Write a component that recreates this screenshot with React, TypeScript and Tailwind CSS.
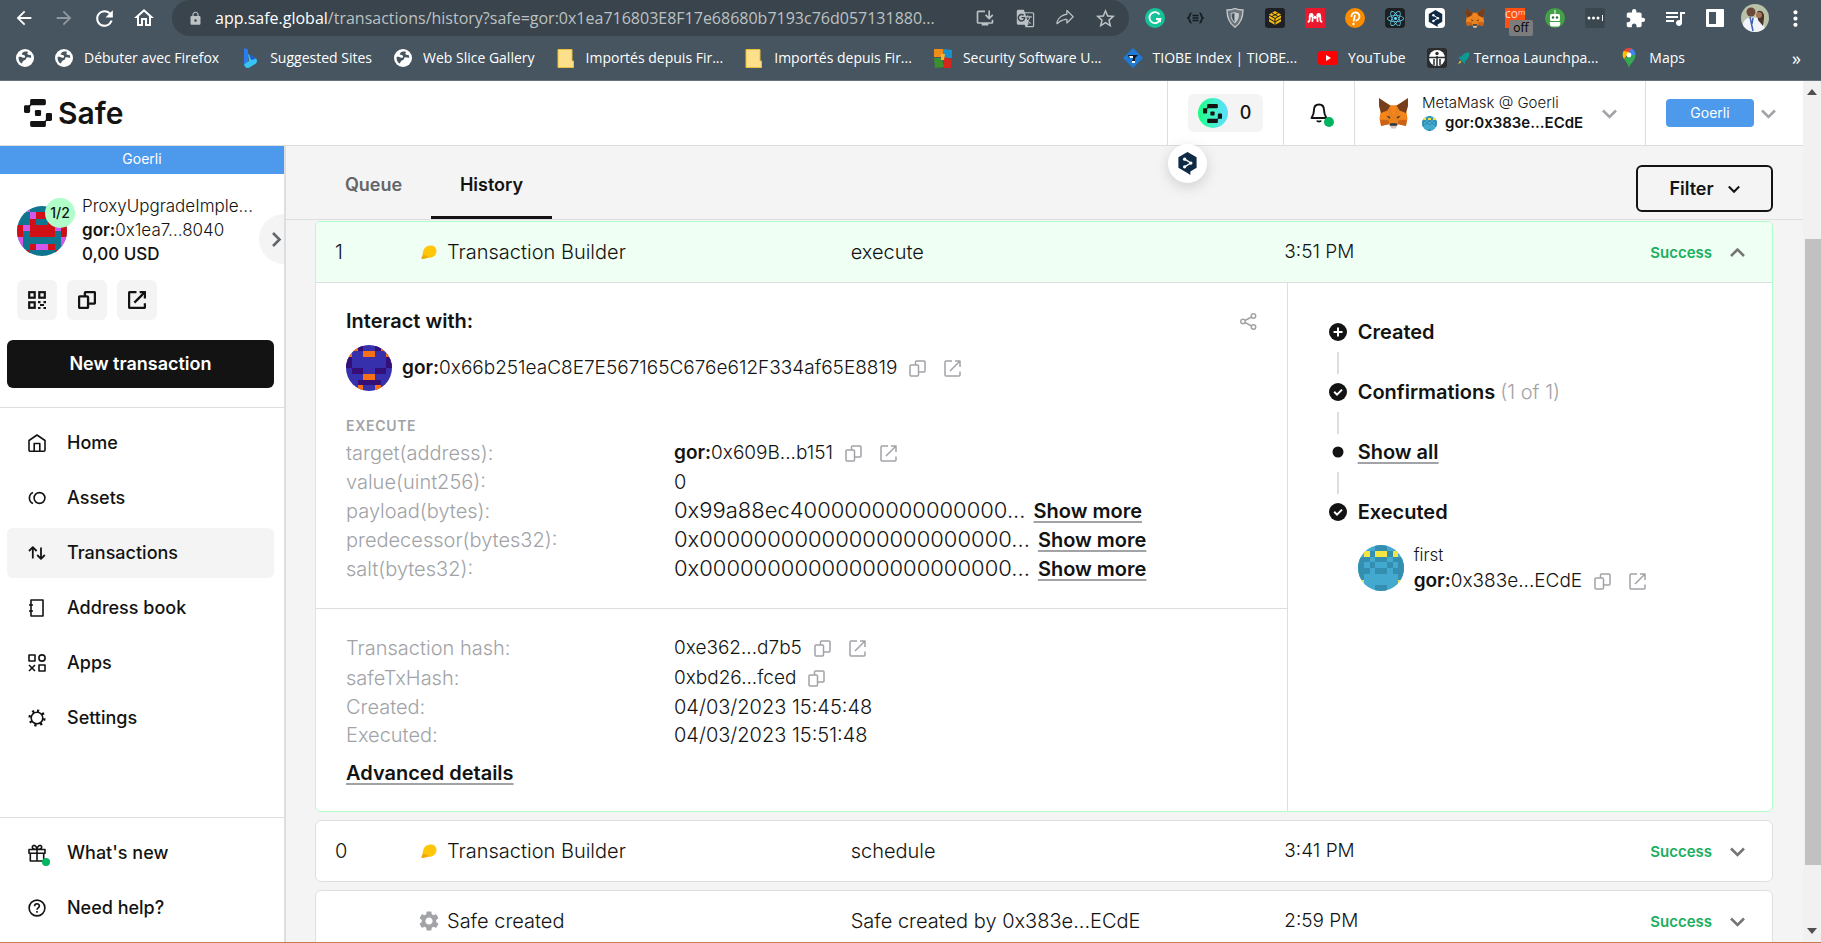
import React from 'react';
import {
  MdArrowBack, MdArrowForward, MdRefresh, MdOutlineHome, MdLock, MdExtension, MdMoreVert, MdQueueMusic,
  MdStarBorder, MdInstallDesktop, MdGTranslate, MdSettings,
} from 'react-icons/md';
import { FaReact } from 'react-icons/fa';
import { PiShareFat } from 'react-icons/pi';

const INK = '#121312';

function Chevron({ up = false, size = 15, color = '#757575', w = 2.6 }: { up?: boolean; size?: number; color?: string; w?: number }) {
  return (
    <svg width={size} height={size} viewBox="0 0 15 15" fill="none" stroke={color} strokeWidth={w} aria-hidden="true">
      <path d={up ? 'M1 11 7.5 4.5 14 11' : 'M1 4.5 7.5 11 14 4.5'} />
    </svg>
  );
}

function SafeMark({ size, className }: { size: number; className?: string }) {
  return (
    <svg width={size} height={size} viewBox="0 0 32 32" fill="currentColor" className={className} aria-hidden="true">
      <path d="M8.5 0H23a2 2 0 0 1 2 2v3.4a1.6 1.6 0 0 1-1.6 1.6H9a2 2 0 0 0-2 2v5.4A1.6 1.6 0 0 1 5.400 16H1.600A1.600 1.600 0 0 1 0 14.400V8.600A1.600 1.600 0 0 1 1.600 7H5.400A1.600 1.600 0 0 0 7 5.400V1.600A1.600 1.600 0 0 1 8.500 0Z" />
      <path d="M23.500 32H9a2 2 0 0 1-2-2v-3.400A1.600 1.600 0 0 1 8.600 25H23a2 2 0 0 0 2-2v-5.400A1.600 1.600 0 0 1 26.600 16h3.800A1.600 1.600 0 0 1 32 17.600v5.800A1.600 1.600 0 0 1 30.400 25h-3.800A1.600 1.600 0 0 0 25 26.600v3.800A1.600 1.600 0 0 1 23.500 32Z" />
      <rect x="12.500" y="12.500" width="7" height="7" rx="1.500" />
    </svg>
  );
}

function Blockie({ rows, colors, size }: { rows: string[]; colors: Record<string, string>; size: number }) {
  return (
    <svg width={size} height={size} viewBox="0 0 8 8" className="shrink-0 rounded-full" shapeRendering="crispEdges" aria-hidden="true">
      <rect width="8" height="8" fill={colors.a} />
      {rows.flatMap((r, y) =>
        r.split('').flatMap((c, x) =>
          c === 'a' ? [] : [
            <rect key={`l${x}-${y}`} x={x} y={y} width="1" height="1" fill={colors[c]} />,
            <rect key={`r${x}-${y}`} x={7 - x} y={y} width="1" height="1" fill={colors[c]} />,
          ]
        )
      )}
    </svg>
  );
}

const proxyBlockie = {
  rows: ['acaa', 'aacb', 'aaba', 'bcbb', 'babb', 'caaa', 'cabc', 'abaa'],
  colors: { a: '#10758f', b: '#d00f17', c: '#d158ea' },
};
const targetBlockie = {
  rows: ['bcba', 'caac', 'baaa', 'baaa', 'abba', 'aaac', 'aabb', 'aaca'],
  colors: { a: '#3730ad', b: '#350f78', c: '#f76f17' },
};
const ownerBlockie = {
  rows: ['aaab', 'acbc', 'bbab', 'baba', 'bbab', 'baaa', 'caaa', 'aaab'],
  colors: { a: '#43a9cf', b: '#338eb0', c: '#f2e442' },
};

function Fox({ size }: { size: number }) {
  return (
    <svg width={size} height={size} viewBox="0 0 30 30" aria-hidden="true">
      <path fill="#e8821e" d="M1 1 12 7h6L29 1l-1.500 12 1 7-1.500 7-7-2-3.500 4h-3L10 25l-7 2-1.500-7 1-7Z" />
      <path fill="#763e1a" d="M1 0 12 7.500 9 12l-6 2.500L1 8ZM29 0 18 7.500l3 4.500 6 2.500L29 8Z" />
      <path fill="#f6851b" d="m12 8 3 11 3-11ZM3 15l6-2.500 2 6-9 3ZM27 15l-6-2.500-2 6 9 3Z" />
      <path fill="#cd6116" d="m2 21 8 .5 1 4-8 1.500ZM28 21l-8 .5-1 4 8 1.500Z" />
      <path fill="#233447" d="m8 17 4 1.500-1 1.500ZM22 17l-4 1.500 1 1.500ZM12 24.500h6l.5 2.500h-7Z" />
      <path fill="#d7c1b3" d="m11 26 2 3.500h4l2-3.500-1 .8h-6Z" />
    </svg>
  );
}

function CopyIcon({ size = 17, w = 1.5 }: { size?: number; w?: number }) {
  return (
    <svg width={size} height={size} viewBox="0 0 17 17" fill="none" stroke="currentColor" strokeWidth={w} strokeLinejoin="round" aria-hidden="true">
      <rect x="1" y="5" width="8.500" height="11" rx="1" />
      <path d="M6.500 5V2a1 1 0 0 1 1-1H15a1 1 0 0 1 1 1v9a1 1 0 0 1-1 1H9.500" />
    </svg>
  );
}

function OpenIcon({ size = 17, w = 1.5 }: { size?: number; w?: number }) {
  return (
    <svg width={size} height={size} viewBox="0 0 17 17" fill="none" stroke="currentColor" strokeWidth={w} strokeLinejoin="round" aria-hidden="true">
      <path d="M8 1H2a1 1 0 0 0-1 1v13a1 1 0 0 0 1 1h13a1 1 0 0 0 1-1v-3.500M6 11 15.500 1.500M11 1h5v6" />
    </svg>
  );
}

function CopyButton() {
  return <button type="button" aria-label="Copy to clipboard" className="text-[#a1a3a7]"><CopyIcon /></button>;
}
function OpenLink() {
  return <a href="#explorer" aria-label="View on explorer" className="text-[#a1a3a7]"><OpenIcon /></a>;
}

/* ---------- browser chrome ---------- */

function GlobeIcon() {
  return (
    <svg width="18" height="18" viewBox="0 0 18 18" aria-hidden="true">
      <circle cx="9" cy="9" r="9" fill="#fff" />
      <path d="M9.500 2.500c-2.500 0-3.500 1.500-3.800 3 1.300.4 2.700.2 3.300 1.500.6 1.200-.7 2-1.800 1.700C5.500 8.300 4.300 7.300 2.600 8c-.3 3 1 5.300 2.900 6.500 1-.5.800-2 2-2.700 1-.6 2.500-.8 2.500-2 0-1 .9-1.800 2-1.500 1 .3 2.200.7 3.300.2-.1-1-.4-2-.9-2.800-1.400.5-3 .3-3-1.200 0-.8.500-1.200 1-1.500-1-.4-1.900-.5-2.900-.5Z" fill="#46555f" />
    </svg>
  );
}
function BingIcon() {
  return (
    <svg width="18" height="20" viewBox="0 0 18 20" aria-hidden="true">
      <path fill="#2a7bf0" d="m3 0 4 1.500V14l-4 2.500Z" />
      <path fill="#36c5f5" d="M3 16.500 8 13l-1-7 8 4.500a4 4 0 0 1 0 5L7.500 20a4 4 0 0 1-4.500-3.500Z" />
      <path fill="#1d5fd1" d="m8 6 7 4.500L11 12l-1.500-1Z" />
    </svg>
  );
}
function FolderIcon() {
  return (
    <svg width="18" height="19" viewBox="0 0 18 19" aria-hidden="true">
      <path fill="#ffe08a" stroke="#e9bf3c" d="M1 .5h14V12h1.500v6.500H1Z" />
    </svg>
  );
}
function SecurityIcon() {
  return (
    <svg width="20" height="20" viewBox="0 0 20 20" aria-hidden="true">
      <path fill="#f08c1a" d="M1 1h9v8H1Z" /><path fill="#1a8fc9" d="M10 1l9 1v8h-6l-3-2Z" />
      <path fill="#3b8f2e" d="M1 10h8l2 9-9 1Z" /><path fill="#d3261c" d="M11 9l8 2-1 9h-7Z" />
      <path fill="#f6b52b" d="M8 6h4l-1 6H8Z" />
    </svg>
  );
}
function TiobeIcon() {
  return (
    <svg width="20" height="20" viewBox="0 0 20 20" aria-hidden="true">
      <path fill="#1f7ad6" d="M10 0 20 10 10 20 0 10Z" />
      <path fill="#10171e" d="M5 7h10l-3 3v4H9l1-4H6Z" /><path fill="#fff" d="M6 8h4v2H7ZM9 13h3v2H9Z" />
    </svg>
  );
}
function YoutubeIcon() {
  return (
    <svg width="20" height="14" viewBox="0 0 20 14" aria-hidden="true">
      <rect width="20" height="14" rx="3" fill="#f00" /><path fill="#fff" d="M8 4v6l5-3Z" />
    </svg>
  );
}
function TernoaIcon() {
  return (
    <svg width="20" height="20" viewBox="0 0 20 20" aria-hidden="true">
      <rect width="20" height="20" rx="3" fill="#2b2c2e" /><circle cx="10" cy="10" r="8" fill="#fff" />
      <path d="M10 8v10M2 9.500h16M7 11v6M13 11v6" stroke="#2b2c2e" strokeWidth="1.500" /><circle cx="10" cy="5.500" r="1.700" fill="#2b2c2e" />
    </svg>
  );
}
function RocketIcon() {
  return (
    <svg width="13" height="13" viewBox="0 0 13 13" aria-hidden="true">
      <path fill="#0c9a94" d="M12.500.5C8 .5 6 2.500 4.500 4.500L1.500 5l1.500 2 3 3 1.500 2.500L8 9.500C11 7 12.500 4.500 12.500.5Z" />
      <path fill="#f1c232" d="m3 8.500 1.500 1.500-3.500 2.500Z" />
    </svg>
  );
}
function MapsIcon() {
  return (
    <svg width="14" height="20" viewBox="0 0 14 20" aria-hidden="true">
      <path fill="#34a853" d="M7 20c1-5 6.500-7 6.500-13H7L2 11c2 3 4 5 5 9Z" />
      <path fill="#4285f4" d="M7 0c3.500 0 6.500 3 6.500 7H9Z" /><path fill="#ea4335" d="M7 0C4.500 0 2.500 1 1.500 3L5 6.500 9.500.5Z" />
      <path fill="#fbbc04" d="M1.500 3C0 6 .5 9 2 11l6-7Z" /><circle cx="7" cy="7" r="2.400" fill="#fff" />
    </svg>
  );
}

const bookmarks: { label: string; icon: React.ReactNode }[] = [
  { label: 'Débuter avec Firefox', icon: <GlobeIcon /> },
  { label: 'Suggested Sites', icon: <BingIcon /> },
  { label: 'Web Slice Gallery', icon: <GlobeIcon /> },
  { label: 'Importés depuis Fir...', icon: <FolderIcon /> },
  { label: 'Importés depuis Fir...', icon: <FolderIcon /> },
  { label: 'Security Software U...', icon: <SecurityIcon /> },
  { label: 'TIOBE Index | TIOBE...', icon: <TiobeIcon /> },
  { label: 'YouTube', icon: <YoutubeIcon /> },
];

function DeeplHex({ size, fill }: { size: number; fill: string }) {
  return (
    <svg width={size} height={size} viewBox="0 0 24 24" aria-hidden="true">
      <path fill={fill} d="m12 0 9.500 5.500v11L15 20.300V24l-4-2.500-8.500-5v-11Z" />
      <path d="m9 7.500 6.500 4L9 15.500" stroke="#fff" strokeWidth="1.400" fill="none" />
      <circle cx="9" cy="7.500" r="1.700" fill="#fff" /><circle cx="15.500" cy="11.500" r="1.700" fill="#fff" /><circle cx="9" cy="15.500" r="1.700" fill="#fff" />
    </svg>
  );
}

const extensions: { name: string; icon: React.ReactNode }[] = [
  { name: 'Grammarly', icon: (
    <svg width="20" height="20" viewBox="0 0 20 20"><circle cx="10" cy="10" r="10" fill="#15c39a" /><path d="M14.500 6.500A5.500 5.500 0 1 0 15.300 11H11" fill="none" stroke="#fff" strokeWidth="1.900" /><path d="m12.500 12.500 3.500-2v4Z" fill="#fff" /></svg>) },
  { name: 'JSON viewer', icon: (
    <svg width="17" height="12" viewBox="0 0 17 12" fill="none" stroke="#151b1f" strokeWidth="1.700"><path d="M4.500 1C2 1 3.500 5 1 6c2.500 1 1 5 3.500 5M12.500 1C15 1 13.500 5 16 6c-2.500 1-1 5-3.500 5M5.500 3.500h6M5.500 6h6M5.500 8.500h6" /></svg>) },
  { name: 'Shield', icon: (
    <svg width="18" height="20" viewBox="0 0 18 20"><path d="M1 2c3 0 6-.5 8-1.500C11 1.500 14 2 17 2c0 8-2 13-8 17.300C3 15 1 10 1 2Z" fill="#6c757b" stroke="#c5cacc" strokeWidth="1.300" /><path d="M5 5.500 9 4.500V15C6 12.500 5 10 5 5.500Z" fill="#46555f" stroke="#c5cacc" /><path d="M9 4.500 13 5.500C13 10 12 12.500 9 15Z" fill="#c5cacc" /></svg>) },
  { name: 'Binance wallet', icon: (
    <svg width="20" height="20" viewBox="0 0 20 20"><rect width="20" height="20" rx="3" fill="#1e2026" /><path d="m10 3 6 3.500v7L10 17l-6-3.500v-7Z" fill="#f0b90b" /><path d="m4 7 6 3.500L16 7M10 10.500V17M7 5l6 3.500M13 5 7 8.500M4 10.500l6 3.500 6-3.500" stroke="#1e2026" fill="none" /></svg>) },
  { name: 'Mendeley', icon: (
    <svg width="20" height="20" viewBox="0 0 20 20"><rect width="20" height="20" fill="#e9182c" /><circle cx="6.300" cy="7.300" r="2.300" fill="#fff" /><circle cx="13.700" cy="7.300" r="2.300" fill="#fff" /><circle cx="10" cy="9.300" r="1.600" fill="#fff" /><path d="M4.700 8v3.500c0 1.500-.7 2.300-2 2.500M8 8.500c-.8 1.500 0 3-.8 5.500M12 8.500c.8 1.500 0 3 .8 5.500M15.300 8v3.500c0 1.500.7 2.300 2 2.500" fill="none" stroke="#fff" strokeWidth="1.800" /></svg>) },
  { name: 'Polkadot', icon: (
    <svg width="20" height="20" viewBox="0 0 20 20"><circle cx="10" cy="10" r="10" fill="#fb8c00" /><path d="M6.500 9a4 4 0 1 1 4 3.500M10 7 8.500 13.500" fill="none" stroke="#fff" strokeWidth="1.800" /><circle cx="8.500" cy="16" r="1.200" fill="#fff" /></svg>) },
  { name: 'React Developer Tools', icon: (
    <span className="flex size-5 items-center justify-center rounded-sm bg-[#1d1f21] text-[#61dafb]"><FaReact size={17} /></span>) },
  { name: 'DeepL', icon: <span className="flex size-5 items-center justify-center rounded-sm bg-white"><DeeplHex size={17} fill="#0f2b46" /></span> },
  { name: 'MetaMask', icon: <Fox size={20} /> },
  { name: 'Compose', icon: (
    <span className="relative flex size-5 items-start bg-[#ff4f12] text-[#ffd9cb]">
      <span className="text-xs leading-3">co</span><span className="text-[8px] leading-2">m</span>
      <span className="absolute top-3 left-1 flex h-4 w-6 items-center justify-center rounded-xs bg-[#7c7c7c] text-xs text-black">off</span>
    </span>) },
  { name: 'Bot', icon: (
    <svg width="20" height="20" viewBox="0 0 20 20"><circle cx="10" cy="10" r="10" fill="#43a047" /><rect x="5" y="6" width="10" height="7" rx="1.500" fill="#fff" /><path d="M10 2v4M5 14.500h10l-1 3.500H6Z" stroke="#fff" fill="#fff" /><circle cx="8" cy="9.500" r="1.200" fill="#2e6f31" /><circle cx="12" cy="9.500" r="1.200" fill="#2e6f31" /></svg>) },
  { name: 'Password manager', icon: (
    <svg width="20" height="20" viewBox="0 0 20 20"><rect width="20" height="20" rx="2" fill="#3a474f" /><circle cx="4" cy="10" r="1.500" fill="#fff" /><circle cx="8.500" cy="10" r="1.500" fill="#fff" /><circle cx="13" cy="10" r="1.500" fill="#fff" /><path d="M17.500 7v6" stroke="#fff" /></svg>) },
  { name: 'Extensions', icon: <MdExtension size={21} /> },
  { name: 'Media controls', icon: <MdQueueMusic size={24} /> },
  { name: 'Side panel', icon: (
    <svg width="18" height="18" viewBox="0 0 18 18"><rect width="18" height="18" rx="1" fill="#fff" /><rect x="3" y="3" width="7" height="12" fill="#46555f" /></svg>) },
  { name: 'Profile', icon: (
    <svg width="28" height="28" viewBox="0 0 28 28" className="rounded-full"><rect width="28" height="28" fill="#b9c2a9" /><path d="M0 28C2 14 6 13 12 14c5-2 10 2 13 14Z" fill="#f2f4fb" /><circle cx="10" cy="8" r="4.500" fill="#6b4a3a" /><path d="M16 8c3-3 8 0 7 6l-1 8-5-6Z" fill="#4b342b" /><circle cx="18" cy="11" r="3" fill="#a87458" /><path d="m9 13 3 14M12 14l-1 6" stroke="#3f62b5" strokeWidth="1.500" /></svg>) },
  { name: 'Menu', icon: <MdMoreVert size={25} /> },
];

function BrowserChrome() {
  return (
    <div className="shrink-0 border-b border-[#66737c] bg-[#46555f] font-['Open_Sans',sans-serif] text-white">
      <div className="flex h-9 items-center">
        <div className="flex items-center pl-3">
          <button type="button" aria-label="Back" className="flex w-10 pl-px"><MdArrowBack size={22} /></button>
          <button type="button" aria-label="Forward" className="flex w-10 pl-px text-[#8f999f]"><MdArrowForward size={22} /></button>
          <button type="button" aria-label="Reload" className="flex w-10"><MdRefresh size={25} /></button>
          <button type="button" aria-label="Home" className="flex w-10"><MdOutlineHome size={24} /></button>
        </div>
        <div className="flex h-9 min-w-0 flex-1 items-center rounded-full bg-[#39444c] pr-1 pl-4 text-[#bcc1c4]">
          <MdLock size={15} className="shrink-0" />
          <div className="min-w-0 flex-1 pl-3 text-base whitespace-nowrap">
            <span className="text-white">app.safe.global</span>/transactions/history?safe=gor:0x1ea716803E8F17e68680b7193c76d057131880...
          </div>
          <button type="button" aria-label="Install app" className="flex w-10 shrink-0 justify-center"><MdInstallDesktop size={20} /></button>
          <button type="button" aria-label="Translate" className="flex w-10 shrink-0 justify-center"><MdGTranslate size={19} /></button>
          <button type="button" aria-label="Share" className="flex w-10 shrink-0 justify-center"><PiShareFat size={20} /></button>
          <button type="button" aria-label="Bookmark" className="flex w-10 shrink-0 justify-center"><MdStarBorder size={23} /></button>
        </div>
        <div className="flex shrink-0 pr-1.5 pl-1.5">
          {extensions.map((e) => (
            <button type="button" key={e.name} aria-label={e.name} className="flex w-10 items-center justify-center">{e.icon}</button>
          ))}
        </div>
      </div>
      <div className="flex h-11 items-center pr-5 pl-4 text-sm">
        <a href="#bookmark" aria-label="Bookmark" className="mr-5"><GlobeIcon /></a>
        <div className="flex gap-[21px] whitespace-nowrap">
          {bookmarks.map((b, i) => (
            <a key={i} href="#bookmark" className="flex items-center gap-2.5"><span className="flex w-5 justify-center">{b.icon}</span>{b.label}</a>
          ))}
          <a href="#bookmark" className="flex items-center gap-2.5"><TernoaIcon /><span className="flex items-center gap-1"><RocketIcon />Ternoa Launchpa...</span></a>
          <a href="#bookmark" className="flex items-center gap-2.5"><span className="flex w-5 justify-center"><MapsIcon /></span>Maps</a>
        </div>
        <button type="button" aria-label="More bookmarks" className="ml-auto text-lg">»</button>
      </div>
    </div>
  );
}

/* ---------- app header ---------- */

function AppHeader() {
  return (
    <header className="flex h-[65px] shrink-0 items-stretch border-b border-[#dcdee0] bg-white">
      <a href="#home" aria-label="Safe" className="flex items-center gap-1.5 pl-6 text-[#121312]">
        <SafeMark size={28} />
        <span className="text-[30px] font-semibold">Safe</span>
      </a>
      <div className="ml-auto flex w-[116px] items-center justify-center border-l border-[#dcdee0]">
        <button type="button" className="flex h-[38px] items-center gap-3 rounded-md bg-[#f4f4f4] pr-3 pl-2.5 text-lg font-medium">
          <span className="flex size-[30px] items-center justify-center rounded-full bg-linear-to-r from-[#12ff80] to-[#5fddff]"><SafeMark size={19} /></span>
          0
        </button>
      </div>
      <button type="button" aria-label="Notifications" className="flex w-[71px] items-center justify-center border-l border-[#dcdee0]">
        <span className="relative">
          <svg width="18" height="20" viewBox="0 0 18 20" fill="none" stroke={INK} strokeWidth="1.900" strokeLinejoin="round" aria-hidden="true">
            <path d="M9 1.500C5.500 1.500 4 4 4 7c0 4-1 5.500-2.500 8h15C15 12.500 14 11 14 7c0-3-1.500-5.500-5-5.500Z" /><path d="M7 17.500c.5 1.500 3.500 1.500 4 0" />
          </svg>
          <span className="absolute -right-1.5 -bottom-1 size-2.5 rounded-full bg-[#00b460]" />
        </span>
      </button>
      <button type="button" className="flex w-[291px] items-center border-l border-[#dcdee0] pl-[23px] text-left">
        <Fox size={31} />
        <span className="ml-[13px] flex flex-col text-[15px] leading-5">
          <span className="font-light">MetaMask @ Goerli</span>
          <span className="flex items-center gap-2 font-semibold"><Blockie {...ownerBlockie} size={15} />gor:0x383e...ECdE</span>
        </span>
        <span className="mr-7 ml-auto"><Chevron color="#a1a3a7" /></span>
      </button>
      <label className="flex w-[158px] items-center border-l border-[#dcdee0] pl-5">
        <select aria-label="Network" className="h-7 w-[88px] appearance-none rounded-sm bg-[#4d99eb] text-center text-sm text-white"><option>Goerli</option></select>
        <span className="ml-[7px]"><Chevron color="#a1a3a7" /></span>
      </label>
    </header>
  );
}

/* ---------- sidebar ---------- */

const navIcon = { width: 18, height: 18, viewBox: '0 0 18 18', fill: 'none', stroke: INK, strokeWidth: 1.6, strokeLinejoin: 'round' as const, 'aria-hidden': true };

const nav: { label: string; icon: React.ReactNode }[] = [
  { label: 'Home', icon: <svg {...navIcon}><path d="M1 6.500 9 1l8 5.500V16a1.200 1.200 0 0 1-1.200 1.200H2.200A1.200 1.200 0 0 1 1 16Z" /><path d="M6.200 17V9.500h5.600V17" /></svg> },
  { label: 'Assets', icon: <svg {...navIcon}><circle cx="11.500" cy="9" r="5.400" /><path d="M5 3.500a6 6 0 0 0 0 11" /></svg> },
  { label: 'Transactions', icon: <svg {...navIcon} strokeWidth="1.800"><path d="M4.800 14.500v-11M1 7l3.800-3.800L8.600 7M13 3.500v11M9.200 11l3.800 3.800L16.800 11" /></svg> },
  { label: 'Address book', icon: <svg {...navIcon}><path d="M3 1h12v16H3ZM1 6h4M1 12h4" /></svg> },
  { label: 'Apps', icon: <svg {...navIcon}><rect x="1" y="1" width="6" height="6" /><circle cx="14" cy="4" r="3.100" /><rect x="11" y="11" width="6" height="6" /><path d="m1 11 6 6M7 11l-6 6" /></svg> },
  { label: 'Settings', icon: <svg {...navIcon}><circle cx="9" cy="9" r="5.800" /><path strokeWidth="2.600" strokeDasharray="2.200 3.558" d="M9 1.700a7.300 7.300 0 1 1-.01 0" /></svg> },
];

function Sidebar() {
  return (
    <aside className="relative flex w-[286px] shrink-0 flex-col border-r-2 border-[#dcdee0] bg-white">
      <div className="flex h-7 items-center justify-center bg-[#4d99eb] pb-0.5 text-sm text-white">Goerli</div>
      <div className="flex gap-[15px] pt-5 pl-[17px]">
        <div className="relative pt-3">
          <Blockie {...proxyBlockie} size={50} />
          <span className="absolute top-1 left-7 flex size-[30px] items-center justify-center rounded-full bg-[#b0ffc9] text-sm font-medium">1/2</span>
        </div>
        <div className="min-w-0 text-[17px] leading-6 whitespace-nowrap">
          <div className="font-light">ProxyUpgradeImple...</div>
          <div className="font-light"><b className="font-semibold">gor:</b>0x1ea7...8040</div>
          <div className="font-medium">0,00 USD</div>
        </div>
      </div>
      <button type="button" aria-label="Collapse sidebar" className="absolute top-[68px] right-0 flex h-[50px] w-[25px] items-center justify-end rounded-l-full bg-[#f4f4f4]">
        <span className="rotate-90"><Chevron up color="#636669" /></span>
      </button>
      <div className="flex gap-2.5 pt-3.5 pl-[17px]">
        <button type="button" aria-label="Show QR code" className="flex size-10 items-center justify-center rounded-md bg-[#f4f4f4]">
          <svg width="18" height="18" viewBox="0 0 18 18" fill="none" stroke={INK} strokeWidth="2.200" aria-hidden="true"><rect x="1.200" y="1.200" width="5.500" height="5.500" /><rect x="11.300" y="1.200" width="5.500" height="5.500" /><rect x="1.200" y="11.300" width="5.500" height="5.500" /><path d="M10 11.200h2.500M15.500 11.200H18M12 14h4M10 17h2.500M15.500 17H18" /></svg>
        </button>
        <button type="button" aria-label="Copy address" className="flex size-10 items-center justify-center rounded-md bg-[#f4f4f4]"><CopyIcon size={18} w={2.2} /></button>
        <a href="#explorer" aria-label="View on explorer" className="flex size-10 items-center justify-center rounded-md bg-[#f4f4f4]"><OpenIcon size={18} w={2.2} /></a>
      </div>
      <div className="px-[7px] pt-5 pb-[19px]">
        <button type="button" className="h-12 w-[267px] rounded-md bg-[#121312] text-lg font-semibold text-white">New transaction</button>
      </div>
      <nav className="flex flex-1 flex-col gap-[5px] border-t border-[#dcdee0] pt-2.5 pl-[7px] text-lg font-medium">
        {nav.map((n) => (
          <a key={n.label} href="#nav" aria-current={n.label === 'Transactions' ? 'page' : undefined}
            className="flex h-[50px] w-[267px] items-center gap-[21px] rounded-md pl-[21px] aria-[current=page]:bg-[#f4f4f4]">
            {n.icon}{n.label}
          </a>
        ))}
      </nav>
      <div className="flex flex-col gap-[5px] border-t border-[#dcdee0] pt-2.5 pb-[9px] pl-[7px] text-lg font-medium">
        <button type="button" className="flex h-[50px] w-[267px] items-center gap-[21px] pl-[21px]">
          <span className="relative">
            <svg {...navIcon}><path d="M1 5.500h16v3.800H1ZM2.300 9.300V17h13.400V9.300M9 5.500V17M9 5.500C6 5.500 4.300 4.500 4.300 3c0-2 4-3 4.700 2.500ZM9 5.500c3 0 4.700-1 4.700-2.500 0-2-4-3-4.700 2.500Z" /></svg>
            <span className="absolute -right-1 -bottom-1 size-2 rounded-full bg-[#00b460]" />
          </span>
          What's new
        </button>
        <a href="#help" className="flex h-[50px] w-[267px] items-center gap-[21px] pl-[21px]">
          <svg {...navIcon}><circle cx="9" cy="9" r="7.900" /><path d="M6.600 7.200C6.600 4 11.400 4 11.400 7c0 1.800-2.400 1.800-2.400 3.700M9 12v1.800" /></svg>
          Need help?
        </a>
      </div>
    </aside>
  );
}

/* ---------- transactions ---------- */

function Hardhat() {
  return (
    <svg width="16" height="16" viewBox="0 0 16 16" aria-hidden="true">
      <path fill="#ffc60a" d="M1.500 11C2 5 4.500 1.500 9.500 1.500c3.500 0 6 2 6 5.500 0 3-2 5.500-5 6.500L6 14Z" /><path fill="#eda90a" d="M.5 13.500 2 10.500c1.500 1 3.500 1 5.500 2.500C6 14.500 3 15 .5 15Z" />
    </svg>
  );
}

type TxRow = { nonce: string; type: string; icon: React.ReactNode; info: string; time: string };

function TxSummary({ tx, open = false }: { tx: TxRow; open?: boolean }) {
  return (
    <button type="button" aria-expanded={open}
      className="grid h-[60px] w-full grid-cols-[84px_431fr_433fr_460fr] items-center pr-[27px] pl-[19px] text-left text-xl font-light">
      <span>{tx.nonce}</span>
      <span className="flex items-center gap-2"><span className="flex w-5 justify-center text-[#a1a3a7]">{tx.icon}</span>{tx.type}</span>
      <span>{tx.info}</span>
      <span className="flex items-center text-[19px]">{tx.time}
        <span className="mr-[18px] ml-auto text-[15px] font-semibold text-[#1aae60]">Success</span><Chevron up={open} />
      </span>
    </button>
  );
}

function Detail({ label, children, h = 'h-7' }: { label: string; children: React.ReactNode; h?: string }) {
  return (
    <div className={`grid grid-cols-[328px_1fr] items-center ${h}`}>
      <dt className="text-[#a1a3a7]">{label}</dt>
      <dd className="flex items-center whitespace-nowrap">{children}</dd>
    </div>
  );
}

const linkCls = 'leading-7 font-semibold underline decoration-[#a1a3a7] decoration-2 underline-offset-3';

function LongValue({ children }: { children: React.ReactNode }) {
  return (
    <span className="flex items-baseline gap-2">
      <span className="text-[22px] leading-7">{children}</span>
      <button type="button" className={linkCls}>Show more</button>
    </span>
  );
}

function Address({ prefix, children, open = true }: { prefix?: string; children: React.ReactNode; open?: boolean }) {
  return (
    <span className="flex items-center gap-3 text-[19px]">
      <span>{prefix && <b className="font-semibold">{prefix}</b>}{children}</span>
      <span className="flex gap-[18px]"><CopyButton />{open && <OpenLink />}</span>
    </span>
  );
}

function Dot({ kind }: { kind: 'plus' | 'check' | 'dot' }) {
  return (
    <svg width="18" height="18" viewBox="0 0 18 18" aria-hidden="true">
      <circle cx="9" cy="9" r={kind === 'dot' ? 5.5 : 9} fill={INK} />
      {kind === 'plus' && <path d="M9 4.500v9M4.500 9h9" stroke="#fff" strokeWidth="2" />}
      {kind === 'check' && <path d="m5.200 8.800 2.800 2.800 5-5" stroke="#fff" strokeWidth="2" fill="none" />}
    </svg>
  );
}

function Step({ kind, children, last = false }: { kind: 'plus' | 'check' | 'dot'; children: React.ReactNode; last?: boolean }) {
  return (
    <li>
      <div className="flex h-6 items-center gap-[11px] font-semibold"><Dot kind={kind} /><div>{children}</div></div>
      {!last && <div className="mt-2 mb-1.5 ml-2 h-[22px] w-0.5 bg-[#dcdee0]" />}
    </li>
  );
}

function TxDetails() {
  return (
    <div className="grid grid-cols-[971fr_484fr] border-t border-[#dcdee0] text-xl font-light">
      <div className="border-r border-[#dcdee0]">
        <div className="border-b border-[#dcdee0] px-[30px] pt-6 pb-[25px]">
          <div className="flex h-7 items-center justify-between">
            <h2 className="font-semibold">Interact with:</h2>
            <button type="button" aria-label="Share" className="text-[#a1a3a7]">
              <svg width="17" height="17" viewBox="0 0 17 17" fill="none" stroke="currentColor" strokeWidth="1.500" aria-hidden="true"><circle cx="3" cy="8.500" r="2.200" /><circle cx="13.500" cy="3" r="2.200" /><circle cx="13.500" cy="14" r="2.200" /><path d="m5 7.500 6.500-3.500M5 9.500l6.500 3.500" /></svg>
            </button>
          </div>
          <div className="mt-2.5 flex items-center gap-2.5">
            <Blockie {...targetBlockie} size={46} />
            <Address prefix="gor:">0x66b251eaC8E7E567165C676e612F334af65E8819</Address>
          </div>
          <h3 className="mt-[23px] text-sm leading-6 font-semibold tracking-wider text-[#a1a3a7]">EXECUTE</h3>
          <dl>
            <Detail label="target(address):" h="h-[30px]"><Address prefix="gor:">0x609B...b151</Address></Detail>
            <Detail label="value(uint256):">0</Detail>
            <Detail label="payload(bytes):" h="h-[29px]"><LongValue>0x99a88ec4000000000000000...</LongValue></Detail>
            <Detail label="predecessor(bytes32):" h="h-[29px]"><LongValue>0x00000000000000000000000...</LongValue></Detail>
            <Detail label="salt(bytes32):" h="h-[29px]"><LongValue>0x00000000000000000000000...</LongValue></Detail>
          </dl>
        </div>
        <div className="px-[30px] pt-6 pb-6">
          <dl>
            <Detail label="Transaction hash:" h="h-[30px]"><Address>0xe362...d7b5</Address></Detail>
            <Detail label="safeTxHash:" h="h-[30px]"><Address open={false}>0xbd26...fced</Address></Detail>
            <Detail label="Created:">04/03/2023 15:45:48</Detail>
            <Detail label="Executed:">04/03/2023 15:51:48</Detail>
          </dl>
          <button type="button" className={`mt-2.5 block ${linkCls}`}>Advanced details</button>
        </div>
      </div>
      <div className="pt-[37px] pl-[41px]">
        <ol>
          <Step kind="plus">Created</Step>
          <Step kind="check">Confirmations <span className="font-light text-[#a1a3a7]">(1 of 1)</span></Step>
          <Step kind="dot"><button type="button" className={linkCls}>Show all</button></Step>
          <Step kind="check" last>Executed</Step>
        </ol>
        <div className="mt-[18px] flex items-center gap-2.5 pl-[29px]">
          <Blockie {...ownerBlockie} size={46} />
          <div>
            <div className="text-[17px] leading-[26px]">first</div>
            <div className="leading-[26px]"><Address prefix="gor:">0x383e...ECdE</Address></div>
          </div>
        </div>
      </div>
    </div>
  );
}

const txs: TxRow[] = [
  { nonce: '1', type: 'Transaction Builder', icon: <Hardhat />, info: 'execute', time: '3:51 PM' },
  { nonce: '0', type: 'Transaction Builder', icon: <Hardhat />, info: 'schedule', time: '3:41 PM' },
  { nonce: '', type: 'Safe created', icon: <MdSettings size={24} className="shrink-0" />, info: 'Safe created by 0x383e...ECdE', time: '2:59 PM' },
];

function Transactions() {
  return (
    <main className="relative min-w-0 flex-1 bg-[#f4f4f4]">
      <div className="flex h-[74px] items-end justify-between border-b border-[#dcdee0] pr-[30px] pl-[30px]">
        <div role="tablist" className="flex h-full text-lg font-semibold">
          <button type="button" role="tab" aria-selected="false" className="w-[115px] border-b-[3px] border-transparent pt-2 text-[#636669]">Queue</button>
          <button type="button" role="tab" aria-selected="true" className="w-[121px] border-b-[3px] border-[#121312] pt-2">History</button>
        </div>
        <button type="button" className="mb-[7px] flex h-[47px] w-[137px] items-center justify-center gap-3.5 rounded-md border-2 border-[#121312] text-lg font-semibold">
          Filter <Chevron size={12} color={INK} />
        </button>
      </div>
      <div className="flex flex-col gap-2 pt-px pr-[30px] pl-[29px]">
        <section className="overflow-hidden rounded-md border border-[#b0ffc9] bg-white">
          <div className="bg-[#effff4]"><TxSummary tx={txs[0]} open /></div>
          <TxDetails />
        </section>
        <section className="rounded-md border border-[#dcdee0] bg-white"><TxSummary tx={txs[1]} /></section>
        <section className="rounded-md border border-[#dcdee0] bg-white"><TxSummary tx={txs[2]} /></section>
      </div>
      <button type="button" aria-label="Translate with DeepL" className="absolute -top-0.5 left-[882px] flex size-[39px] items-center justify-center rounded-full bg-white shadow-[0_4px_14px_rgba(0,0,0,0.15)]">
        <DeeplHex size={23} fill="#0f2b46" />
      </button>
    </main>
  );
}

function Scrollbar() {
  return (
    <div className="flex w-[18px] shrink-0 flex-col items-center bg-[#f1f1f1] py-2" aria-hidden="true">
      <svg width="10" height="6" viewBox="0 0 10 6"><path d="M0 6 5 0l5 6Z" fill="#505050" /></svg>
      <div className="mt-36 mb-[63px] w-4 flex-1 self-end bg-[#c1c1c1]" />
      <svg width="10" height="6" viewBox="0 0 10 6"><path d="M0 0h10L5 6Z" fill="#505050" /></svg>
    </div>
  );
}

export default function App() {
  return (
    <div className="flex h-screen flex-col overflow-hidden border-b border-[#c97a55] bg-white font-['Inter',sans-serif] text-[#121312]">
      <BrowserChrome />
      <div className="flex min-h-0 flex-1">
        <div className="flex min-w-0 flex-1 flex-col">
          <AppHeader />
          <div className="flex min-h-0 flex-1">
            <Sidebar />
            <Transactions />
          </div>
        </div>
        <Scrollbar />
      </div>
    </div>
  );
}
